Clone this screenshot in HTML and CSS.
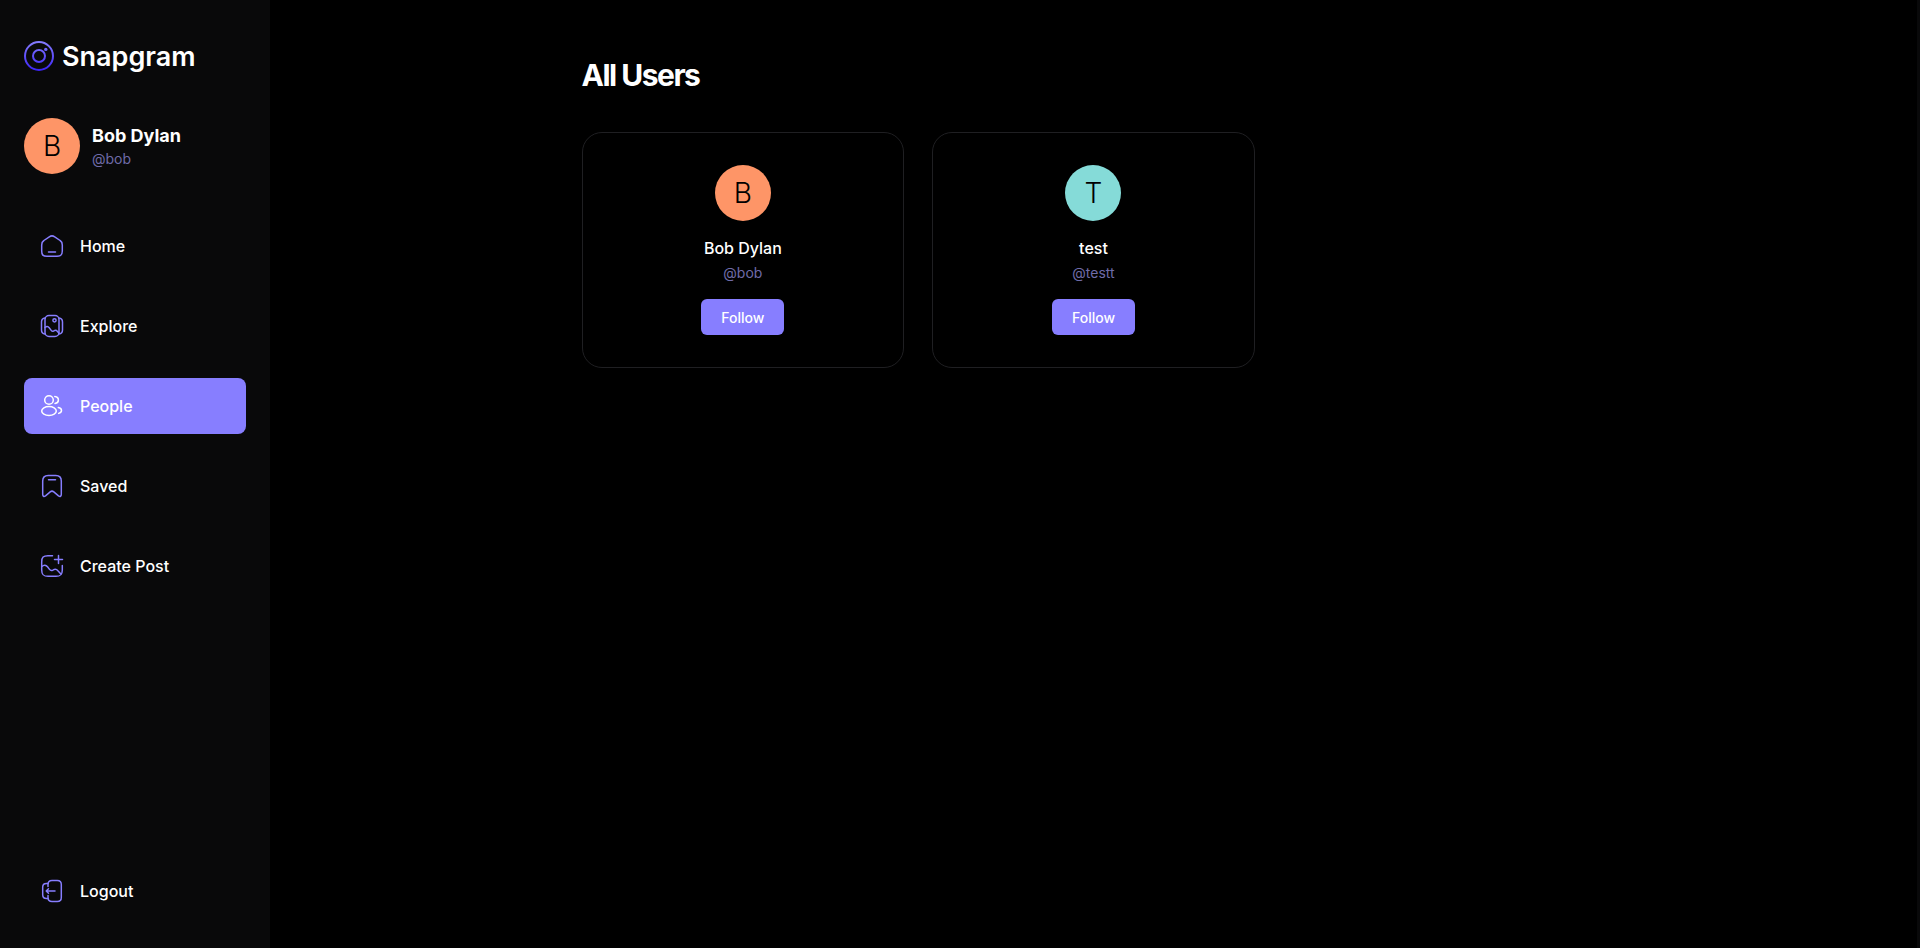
FILE: index.html
```
<!DOCTYPE html>
<html lang="en">
<head>
  <meta charset="UTF-8" />
  <meta name="viewport" content="width=device-width, initial-scale=1.0" />
  <title>Snapgram</title>
  <link rel="stylesheet" href="styles.css">
</head>
<body>
  <div class="app">
    <!-- Left sidebar -->
    <aside class="sidebar">
      <div class="sidebar-top">
        <a href="#" class="logo">
          <svg width="30" height="30" viewBox="0 0 30 30" fill="none" aria-hidden="true">
            <defs>
              <linearGradient id="logo-gradient" x1="15" y1="0" x2="15" y2="30" gradientUnits="userSpaceOnUse">
                <stop stop-color="#877EFF" />
                <stop offset="1" stop-color="#3A22F5" />
              </linearGradient>
            </defs>
            <g stroke="url(#logo-gradient)" stroke-width="2">
              <circle cx="15" cy="15" r="14" />
              <circle cx="15" cy="15" r="6" />
            </g>
            <circle cx="21.8" cy="8.4" r="1.7" fill="url(#logo-gradient)" />
          </svg>
          <span>Snapgram</span>
        </a>

        <a href="#" class="profile">
          <span class="avatar avatar-orange">B</span>
          <span class="profile-text">
            <strong class="profile-name">Bob Dylan</strong>
            <span class="handle">@bob</span>
          </span>
        </a>

        <nav>
          <ul class="nav-list">
            <li>
              <a href="#" class="nav-link">
                <svg class="icon" viewBox="0 0 24 24" aria-hidden="true">
                  <path d="M1.700 11c0-2.400.2-3.200 2.200-4.500l5.400-3.700c1.900-1.300 3.500-1.300 5.400 0l5.400 3.700c2 1.300 2.200 2.100 2.200 4.500v6c0 4-1.300 5.300-5.300 5.300H7c-4 0-5.300-1.300-5.300-5.300z" />
                  <path d="M8.500 18h7" />
                </svg>
                Home
              </a>
            </li>
            <li>
              <a href="#" class="nav-link">
                <svg class="icon" viewBox="0 0 24 24" aria-hidden="true">
                  <rect x="5" y="1.500" width="14" height="21" rx="4" />
                  <path d="M5 4C2.500 4.300 1.500 5.500 1.500 8v8c0 2.500 1 3.700 3.500 4M19 4c2.500.3 3.500 1.500 3.500 4v8c0 2.500-1 3.700-3.500 4" />
                  <circle cx="14.500" cy="6.300" r="1.600" />
                  <path d="M5 13.500c1.600-1.300 3-1.200 4.200.3l2 2.600c.8 1 1.500 1.200 2.600.5 1.400-1 2.600-.8 3.500.4l1.700 2" />
                </svg>
                Explore
              </a>
            </li>
            <li>
              <a href="#" class="nav-link active" aria-current="page">
                <svg class="icon" viewBox="0 0 24 24" aria-hidden="true">
                  <circle cx="9" cy="6" r="4.300" />
                  <ellipse cx="9" cy="17" rx="7.300" ry="4.500" />
                  <path d="M14.800 2.500c2.300.3 3.600 1.600 3.600 3.500s-1.300 3.200-3.400 3.500M18.300 13.600c2 .4 3.200 1.400 3.200 2.900 0 1.400-1 2.400-2.800 2.900" />
                </svg>
                People
              </a>
            </li>
            <li>
              <a href="#" class="nav-link">
                <svg class="icon" viewBox="0 0 24 24" aria-hidden="true">
                  <path d="M2.700 7c0-4 1.500-5.500 5.500-5.500h7.600c4 0 5.500 1.500 5.500 5.500v13.300c0 2-1.200 2.700-2.800 1.500l-4.700-3.900c-1.200-1-2.400-1-3.600 0l-4.700 3.900c-1.600 1.200-2.800.5-2.800-1.500z" />
                  <path d="M8.500 5.800h7" />
                </svg>
                Saved
              </a>
            </li>
            <li>
              <a href="#" class="nav-link">
                <svg class="icon" viewBox="0 0 24 24" aria-hidden="true">
                  <path d="M12.500 1.700H8C3.300 1.700 1.700 3.300 1.700 8v8c0 4.700 1.600 6.300 6.300 6.300h8c4.700 0 6.300-1.600 6.300-6.300v-4.500" />
                  <path d="M18.500 1.500v8M14.500 5.500h8" />
                  <path d="M1.700 12.500c2.300-2 4.300-1.700 5.800.3l2 2.600c1 1.300 2 1.500 3.400.7 2.100-1.300 3.700-1 5 .6l3 3.300" />
                </svg>
                Create Post
              </a>
            </li>
          </ul>
        </nav>
      </div>

      <button type="button" class="logout">
        <svg class="icon" viewBox="0 0 24 24" aria-hidden="true">
          <path d="M8 7.500V5.500c0-2.900 1.100-4 4-4h5.300c2.900 0 4 1.100 4 4v13c0 2.900-1.100 4-4 4H12c-2.900 0-4-1.100-4-4v-2" />
          <path d="M8 4.500H6.500c-2.700 0-3.800 1.100-3.800 3.800v7.400c0 2.700 1.100 3.800 3.800 3.800H8" />
          <path d="M15 12H6.500M8.500 9.700L6.200 12l2.300 2.300" />
        </svg>
        Logout
      </button>
    </aside>

    <!-- Users -->
    <main class="content">
      <div class="users">
        <h1 class="users-title">All Users</h1>
        <ul class="user-grid">
          <li class="user-card">
            <span class="avatar avatar-orange">B</span>
            <div class="user-info">
              <a href="#" class="user-name">Bob Dylan</a>
              <span class="handle">@bob</span>
            </div>
            <button type="button" class="follow">Follow</button>
          </li>
          <li class="user-card">
            <span class="avatar avatar-teal">T</span>
            <div class="user-info">
              <a href="#" class="user-name">test</a>
              <span class="handle">@testt</span>
            </div>
            <button type="button" class="follow">Follow</button>
          </li>
        </ul>
      </div>
    </main>
  </div>
</body>
</html>
```
FILE: styles.css
```
* {
  box-sizing: border-box;
  font-family: Inter, sans-serif;
}

html, body {
  margin: 0;
  padding: 0;
  height: 100%;
  background-color: #000;
  color: #fff;
}

ul {
  list-style: none;
  margin: 0;
  padding: 0;
}

a {
  color: inherit;
  text-decoration: none;
}

button {
  border: none;
  color: #fff;
  cursor: pointer;
}

.app {
  display: flex;
  height: 100vh;
}

/* Sidebar */
.sidebar {
  width: 270px;
  flex-shrink: 0;
  padding: 38px 24px 29px;
  background-color: #09090a;
  display: flex;
  flex-direction: column;
  justify-content: space-between;
}

.sidebar-top {
  display: flex;
  flex-direction: column;
  gap: 44px;
}

.logo {
  height: 36px;
  display: flex;
  align-items: center;
  gap: 8px;
  font-size: 27px;
  font-weight: 600;
}

.profile {
  display: flex;
  align-items: center;
  gap: 12px;
}

.profile-text {
  display: flex;
  flex-direction: column;
  gap: 1px;
}

.profile-name {
  font-size: 18px;
  font-weight: 700;
  line-height: 25px;
}

.handle {
  color: #6f6ba8;
  font-size: 14px;
  line-height: 20px;
}

.avatar {
  width: 56px;
  height: 56px;
  border-radius: 50%;
  display: flex;
  align-items: center;
  justify-content: center;
  color: #000;
  font-size: 28px;
  font-weight: 300;
}

.avatar-orange {
  background-color: #fe9567;
}

.avatar-teal {
  background-color: #85dbd8;
}

.nav-list {
  display: flex;
  flex-direction: column;
  gap: 24px;
}

.nav-link,
.logout {
  display: flex;
  align-items: center;
  gap: 16px;
  width: 100%;
  height: 56px;
  padding: 16px;
  border-radius: 8px;
  background: none;
  font-size: 16px;
  font-weight: 500;
}

.nav-link.active {
  background-color: #877eff;
}

.icon {
  width: 24px;
  height: 24px;
  fill: none;
  stroke: #877eff;
  stroke-width: 1.5;
  stroke-linecap: round;
  stroke-linejoin: round;
}

.active .icon {
  stroke: #fff;
}

/* Content */
.content {
  flex: 1;
  padding: 54px 56px;
  border-right: 3px solid #09090a;
  overflow-y: auto;
}

.users {
  max-width: 1024px;
  margin: 0 auto;
  display: flex;
  flex-direction: column;
  gap: 36px;
}

.users-title {
  margin: 0;
  font-size: 30px;
  font-weight: 700;
  line-height: 42px;
  letter-spacing: -0.05em;
}

.user-grid {
  display: grid;
  grid-template-columns: repeat(3, 1fr);
  gap: 28px;
}

.user-card {
  display: flex;
  flex-direction: column;
  align-items: center;
  gap: 16px;
  padding: 32px;
  border: 1px solid #1f1f22;
  border-radius: 20px;
}

.user-info {
  display: flex;
  flex-direction: column;
  align-items: center;
  gap: 4px;
}

.user-name {
  font-size: 16px;
  font-weight: 500;
  line-height: 22px;
}

.follow {
  height: 36px;
  padding: 0 20px;
  border-radius: 6px;
  background-color: #877eff;
  font-size: 14px;
  font-weight: 500;
}

@media (max-width: 1100px) {
  .user-grid {
    grid-template-columns: repeat(2, 1fr);
  }
}
```
